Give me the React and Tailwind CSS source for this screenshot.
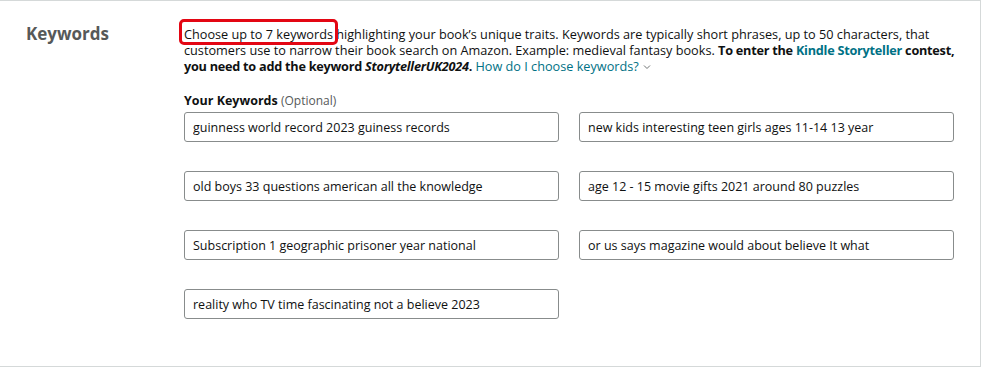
import React from 'react';

const keywords = [
  'guinness world record 2023 guiness records',
  'new kids interesting teen girls ages 11-14 13 year',
  'old boys 33 questions american all the knowledge',
  'age 12 - 15 movie gifts 2021 around 80 puzzles',
  'Subscription 1 geographic prisoner year national',
  'or us says magazine would about believe It what',
  'reality who TV time fascinating not a believe 2023',
];

export default function App() {
  return (
    <div className="w-[981px] h-[368px] bg-white font-['Open_Sans','Noto_Sans',sans-serif] text-[#0f1111]">
      <div className="h-[367px] border-t border-r border-b border-[#d5d9d9] flex">
        {/* LABEL COLUMN */}
        <div className="w-[184px] shrink-0 pl-[26px] pt-[20px]">
          <h2 className="text-[17px] font-bold text-[#565959] leading-[26px]">Keywords</h2>
        </div>

        {/* CONTENT */}
        <div className="flex-1 pr-[26px] pt-[25px]">
          <p className="text-[12.7px] leading-[16px] -mr-[4px]">
            <span className="relative">
              Choose up to 7 keywords
              <span className="absolute left-[-5px] right-[-5px] top-[-6px] bottom-[-2px] border-[3px] border-[#e30613] rounded-[5px]" />
            </span>{' '}
            highlighting your book’s unique traits. Keywords are typically short phrases, up to 50 characters, that customers use to narrow their book search on Amazon. Example: medieval fantasy books.{' '}
            <b className="tracking-[-0.25px]">To enter the <span className="text-[#007185]">Kindle Storyteller</span> contest, you need to add the keyword <i>StorytellerUK2024</i>.</b>{' '}
            <span className="text-[#007185]">How do I choose keywords?</span>
            <svg className="inline-block ml-[4px] mb-[2px]" width="8" height="6" viewBox="0 0 8 6" fill="none">
              <path d="M1 1.5 L4 4.5 L7 1.5" stroke="#6f7373" strokeWidth="1" />
            </svg>
          </p>

          <div className="mt-[19px] text-[12.5px] leading-[16px]">
            <span className="font-bold">Your Keywords</span>{' '}
            <span className="text-[#565959] text-[12px]">(Optional)</span>
          </div>

          <div className="mt-[3px] grid grid-cols-2 gap-x-[20px] gap-y-[29px]">
            {keywords.map((k) => (
              <input
                key={k}
                readOnly
                value={k}
                className="h-[30px] w-full border border-[#888c8c] rounded-[3px] px-[8px] text-[12.5px] text-[#0f1111] bg-white outline-none font-['Open_Sans','Noto_Sans',sans-serif]"
              />
            ))}
          </div>
        </div>
      </div>
    </div>
  );
}
